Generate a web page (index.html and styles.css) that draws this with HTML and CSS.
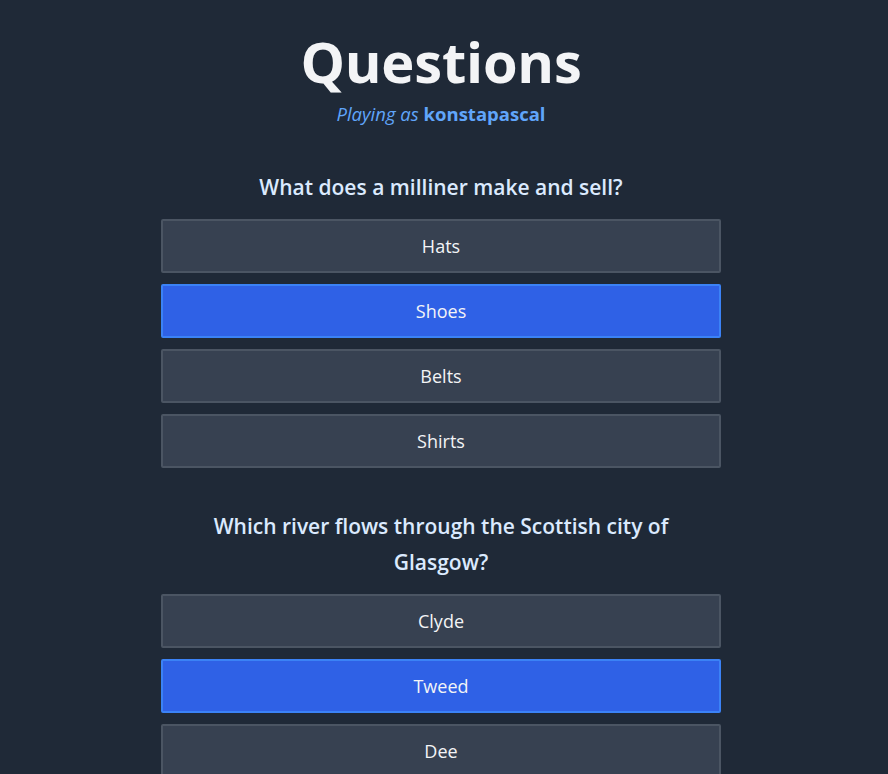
FILE: index.html
```html
<!DOCTYPE html>
<html lang="en">
<head>
<meta charset="utf-8">
<title>Questions</title>
<link rel="stylesheet" href="styles.css">
</head>
<body>
<main class="page">
  <header class="header">
    <h1 class="title">Questions</h1>
    <p class="subtitle"><em>Playing as</em> <strong>konstapascal</strong></p>
  </header>

  <section class="question">
    <h2 class="question-text">What does a milliner make and sell?</h2>
    <div class="answers">
      <button class="answer">Hats</button>
      <button class="answer selected">Shoes</button>
      <button class="answer">Belts</button>
      <button class="answer">Shirts</button>
    </div>
  </section>

  <section class="question">
    <h2 class="question-text">Which river flows through the Scottish city of Glasgow?</h2>
    <div class="answers">
      <button class="answer">Clyde</button>
      <button class="answer selected">Tweed</button>
      <button class="answer">Dee</button>
      <button class="answer">Tay</button>
    </div>
  </section>
</main>
</body>
</html>
```

FILE: styles.css
```css
html, body {
  margin: 0;
  padding: 0;
  background: #1f2937;
}

body {
  font-family: "Open Sans", "Noto Sans", sans-serif;
  color: #f3f4f6;
}

.page {
  display: flex;
  flex-direction: column;
  align-items: center;
  padding: 25px 6px 40px 0;
}

.header {
  display: flex;
  flex-direction: column;
  align-items: center;
}

.title {
  margin: 0;
  font-size: 56px;
  line-height: 72px;
  font-weight: 700;
  color: #f3f4f6;
  letter-spacing: -0.2px;
}

.subtitle {
  margin: 3px 0 0;
  font-size: 18.5px;
  line-height: 27px;
  color: #60a5fa;
}

.subtitle strong {
  font-weight: 700;
}

.question {
  width: 560px;
  margin-top: 40px;
  display: flex;
  flex-direction: column;
}

.question:first-of-type {
  margin-top: 42px;
}

.question-text {
  margin: 0 30px 14px;
  text-align: center;
  font-size: 21px;
  line-height: 36px;
  font-weight: 600;
  color: #dbeafe;
}

.answers {
  display: flex;
  flex-direction: column;
  gap: 11px;
}

.answer {
  height: 54px;
  border: 2px solid #4b5563;
  border-radius: 2px;
  background: #374151;
  color: #f3f4f6;
  font-family: inherit;
  font-size: 18px;
  text-align: center;
  padding: 0;
}

.answer.selected {
  background: #2f61e6;
  border-color: #3b82f6;
}
```
